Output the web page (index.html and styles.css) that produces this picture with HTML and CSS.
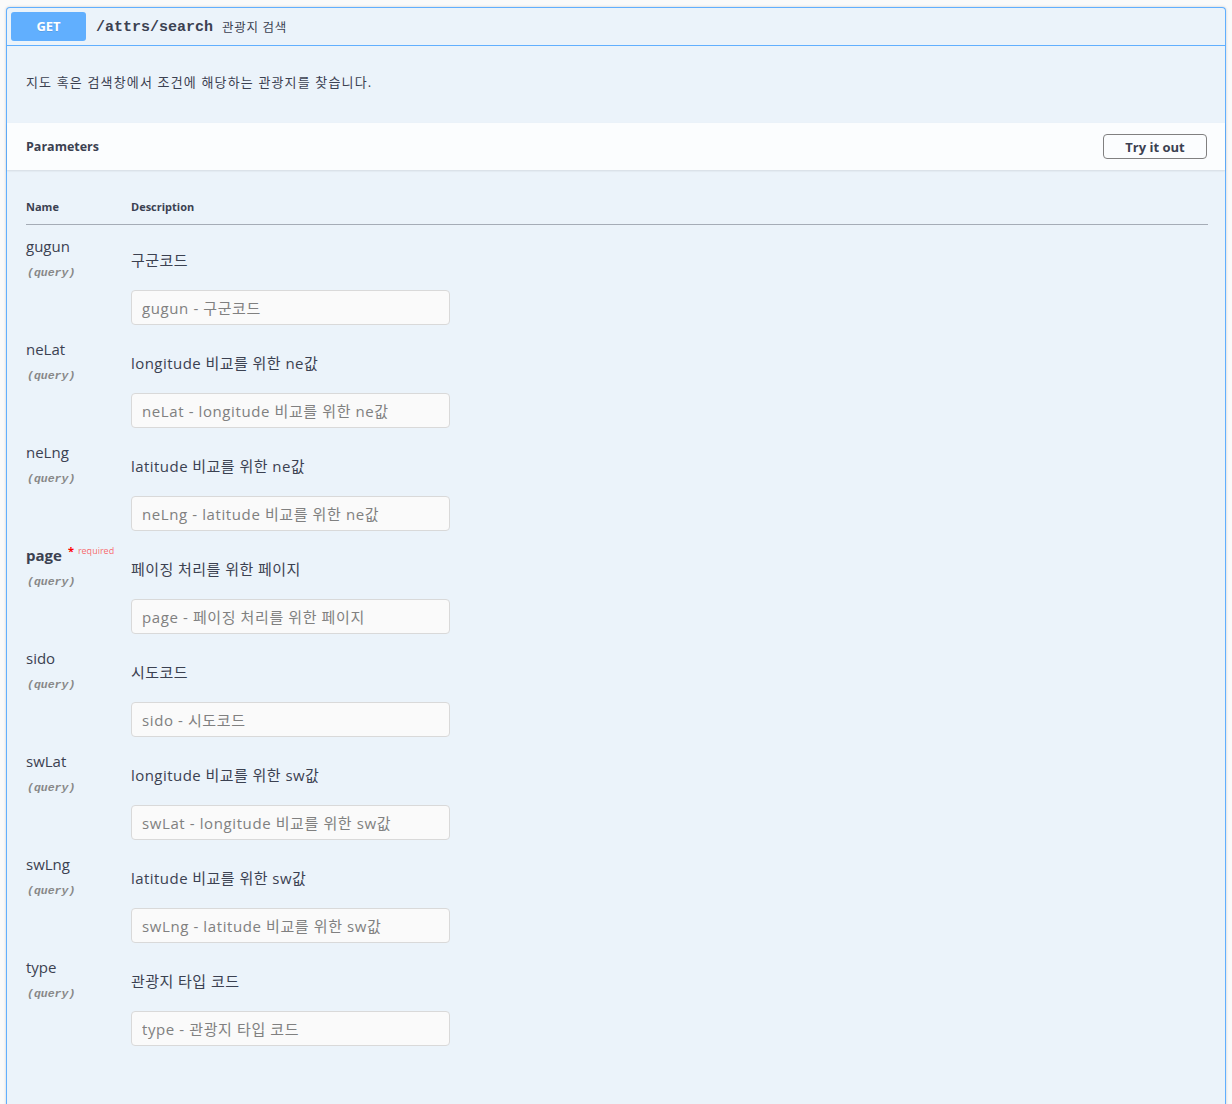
FILE: index.html
```html
<!DOCTYPE html>
<html lang="ko">
<head>
<meta charset="utf-8">
<link rel="stylesheet" href="styles.css">
</head>
<body>
<div class="opblock">
  <div class="summary">
    <span class="method">GET</span>
    <span class="path">/attrs/search</span>
    <span class="summary-desc">관광지 검색</span>
  </div>
  <div class="op-desc">지도 혹은 검색창에서 조건에 해당하는 관광지를 찾습니다.</div>
  <div class="section-header">
    <h4 class="section-title">Parameters</h4>
    <button class="try-out">Try it out</button>
  </div>
  <div class="params">
    <div class="params-head">
      <div class="col-name">Name</div>
      <div class="col-desc">Description</div>
    </div>
    <div class="param">
      <div class="col-name"><div class="pname">gugun</div><div class="pin">(query)</div></div>
      <div class="col-desc"><p class="pdesc">구군코드</p><input class="pinput" placeholder="gugun - 구군코드"></div>
    </div>
    <div class="param">
      <div class="col-name"><div class="pname">neLat</div><div class="pin">(query)</div></div>
      <div class="col-desc"><p class="pdesc">longitude 비교를 위한 ne값</p><input class="pinput" placeholder="neLat - longitude 비교를 위한 ne값"></div>
    </div>
    <div class="param">
      <div class="col-name"><div class="pname">neLng</div><div class="pin">(query)</div></div>
      <div class="col-desc"><p class="pdesc">latitude 비교를 위한 ne값</p><input class="pinput" placeholder="neLng - latitude 비교를 위한 ne값"></div>
    </div>
    <div class="param">
      <div class="col-name"><div class="pname required">page<span class="star">*</span><span class="req">required</span></div><div class="pin">(query)</div></div>
      <div class="col-desc"><p class="pdesc">페이징 처리를 위한 페이지</p><input class="pinput" placeholder="page - 페이징 처리를 위한 페이지"></div>
    </div>
    <div class="param">
      <div class="col-name"><div class="pname">sido</div><div class="pin">(query)</div></div>
      <div class="col-desc"><p class="pdesc">시도코드</p><input class="pinput" placeholder="sido - 시도코드"></div>
    </div>
    <div class="param">
      <div class="col-name"><div class="pname">swLat</div><div class="pin">(query)</div></div>
      <div class="col-desc"><p class="pdesc">longitude 비교를 위한 sw값</p><input class="pinput" placeholder="swLat - longitude 비교를 위한 sw값"></div>
    </div>
    <div class="param">
      <div class="col-name"><div class="pname">swLng</div><div class="pin">(query)</div></div>
      <div class="col-desc"><p class="pdesc">latitude 비교를 위한 sw값</p><input class="pinput" placeholder="swLng - latitude 비교를 위한 sw값"></div>
    </div>
    <div class="param">
      <div class="col-name"><div class="pname">type</div><div class="pin">(query)</div></div>
      <div class="col-desc"><p class="pdesc">관광지 타입 코드</p><input class="pinput" placeholder="type - 관광지 타입 코드"></div>
    </div>
  </div>
</div>
</body>
</html>
```

FILE: styles.css
```css
html, body {
  margin: 0;
  background: #fafafa;
}
body {
  padding: 7px 6px 0 6px;
  font-family: "Open Sans", "Noto Sans CJK KR", sans-serif;
  color: #3b4151;
}
.opblock {
  width: 1220px;
  box-sizing: border-box;
  border: 1px solid #61affe;
  border-bottom: none;
  border-radius: 4px 4px 0 0;
  background: #ebf3fa;
  box-shadow: 0 0 3px rgba(0,0,0,.19);
  min-height: 1100px;
}
.summary {
  display: flex;
  align-items: center;
  height: 37px;
  padding: 0 4px;
  border-bottom: 1px solid #61affe;
}
.method {
  width: 75px;
  height: 29px;
  line-height: 29px;
  text-align: center;
  background: #61affe;
  color: #fff;
  font-weight: 700;
  font-size: 13px;
  border-radius: 3px;
  text-shadow: 0 1px 0 rgba(0,0,0,.1);
  font-family: "Open Sans", sans-serif;
}
.path {
  margin-left: 10px;
  margin-top: 2px;
  font-family: "Liberation Mono", monospace;
  font-weight: 700;
  font-size: 15px;
  color: #3b4151;
}
.summary-desc {
  margin-left: 9px;
  font-size: 12.5px;
  letter-spacing: 0.7px;
  color: #3b4151;
}
.op-desc {
  height: 77px;
  box-sizing: border-box;
  padding: 26px 19px 0 19px;
  font-size: 13px;
  line-height: 20px;
  letter-spacing: 1.15px;
}
.section-header {
  display: flex;
  align-items: center;
  justify-content: space-between;
  height: 47px;
  padding: 0 18px 0 19px;
  background: rgba(255,255,255,.8);
  box-shadow: 0 1px 2px rgba(0,0,0,.1);
}
.section-title {
  margin: 0;
  font-size: 12.5px;
  font-weight: 700;
}
.try-out {
  width: 104px;
  height: 25px;
  border: 1.5px solid #808080;
  border-radius: 4px;
  background: transparent;
  font-family: "Open Sans", sans-serif;
  font-size: 13px;
  font-weight: 700;
  color: #3b4151;
  padding: 0;
}
.params {
  padding: 0 17px 0 19px;
}
.params-head {
  display: flex;
  align-items: flex-end;
  height: 55px;
  padding-bottom: 10px;
  box-sizing: border-box;
  border-bottom: 1px solid rgba(59,65,81,.4);
  font-size: 11px;
  font-weight: 700;
}
.col-name {
  width: 105px;
  flex: none;
}
.col-desc {
  flex: 1;
}
.param {
  display: flex;
  height: 103px;
  padding-top: 10px;
  box-sizing: border-box;
}
.params-head + .param {
  height: 104px;
  padding-top: 11px;
}
.pname {
  font-size: 15px;
  line-height: 20px;
}
.pname.required {
  font-weight: 700;
}
.star {
  color: red;
  font-size: 11px;
  line-height: 0;
  margin-left: 6px;
  position: relative;
  top: -6px;
}
.req {
  color: rgba(255,0,0,.6);
  font-size: 9px;
  line-height: 0;
  font-weight: 400;
  margin-left: 4px;
  position: relative;
  top: -7px;
}
.pin {
  margin-top: 10px;
  font-family: "Liberation Mono", monospace;
  font-style: italic;
  font-weight: 700;
  font-size: 11.5px;
  color: #888;
  line-height: 14px;
  margin-left: 1px;
}
.pdesc {
  margin: 4px 0 20px 0;
  font-size: 15px;
  line-height: 20px;
  padding-top: 10px;
  letter-spacing: 0.45px;
}
.pinput {
  display: block;
  width: 319px;
  height: 35px;
  box-sizing: border-box;
  border: 1px solid #d9d9d9;
  border-radius: 4px;
  background: #fafafa;
  padding: 0 10px;
  font-family: "Open Sans", "Noto Sans CJK KR", sans-serif;
  font-size: 15px;
  letter-spacing: 0.6px;
  color: #3b4151;
}
.pinput::placeholder {
  color: #808080;
}
```
